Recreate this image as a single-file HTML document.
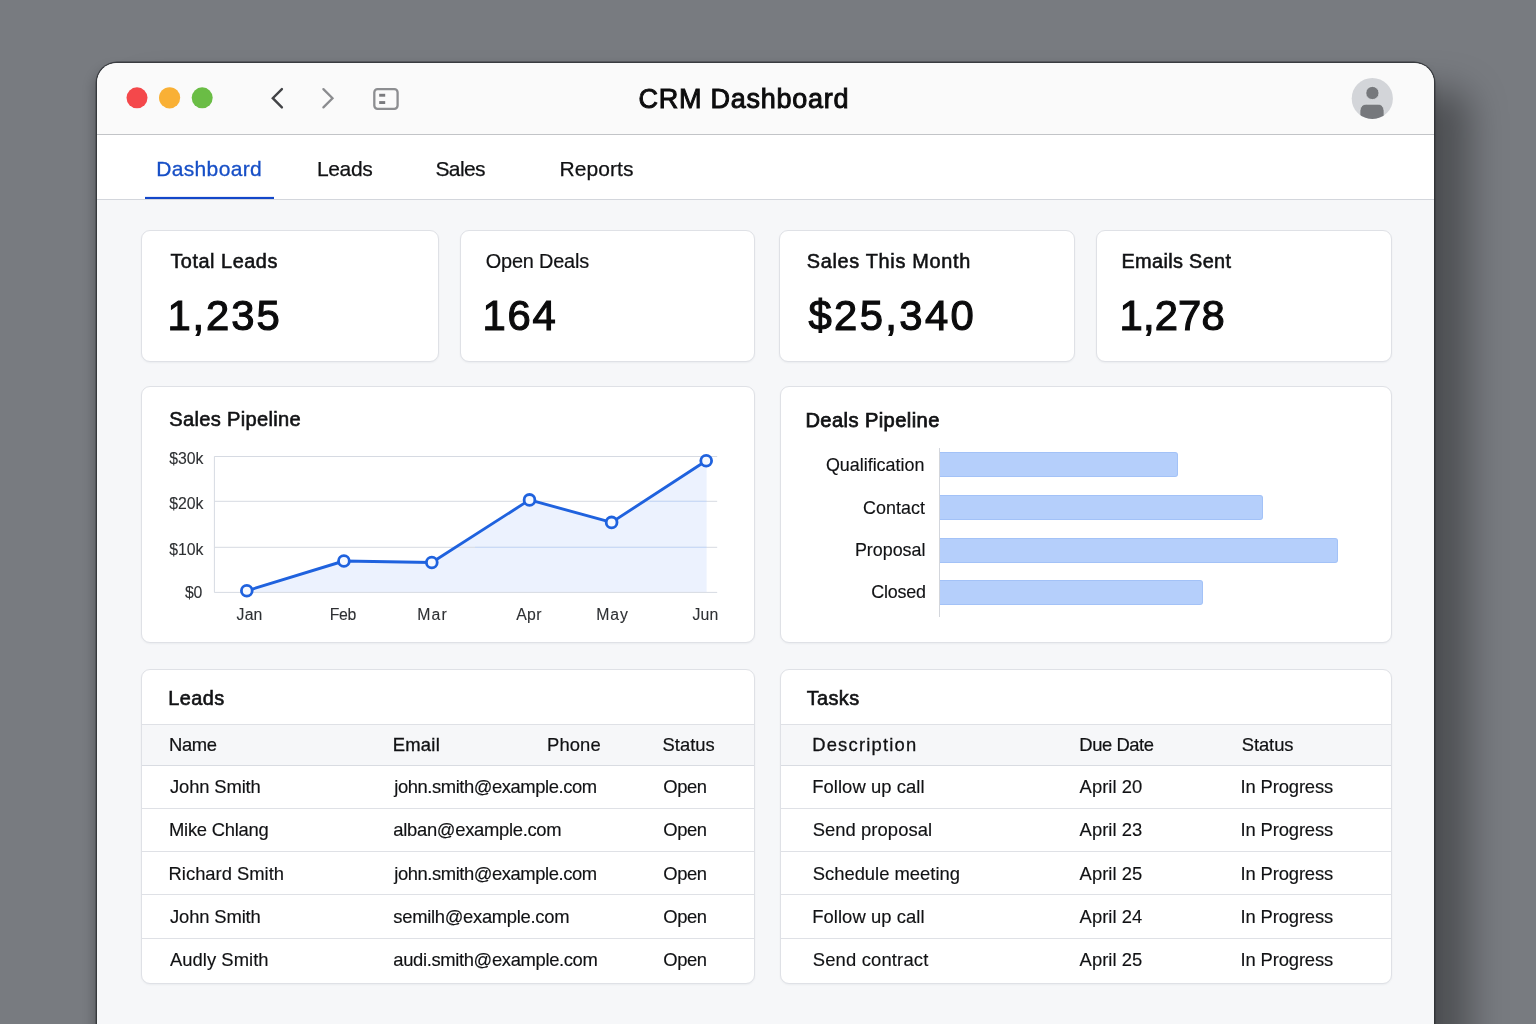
<!DOCTYPE html>
<html lang="en">
<head>
<meta charset="utf-8">
<title>CRM Dashboard</title>
<style>
  html,body{margin:0;padding:0;}
  body{width:1536px;height:1024px;overflow:hidden;position:relative;background:#787b80;font-family:"Liberation Sans",sans-serif;}
  .abs{position:absolute;}
  .win{position:absolute;left:97px;top:63px;width:1337px;height:1000px;border-radius:20px 20px 0 0;background:#f6f7f9;
       box-shadow:0 0 0 1.4px rgba(44,46,50,.8), 36px 27px 36px 0 rgba(0,0,0,.35), -3px 6px 12px 1px rgba(0,0,0,.20);overflow:hidden;}
  .titlebar{position:absolute;left:0;top:0;width:100%;height:71px;background:#fafafa;border-bottom:1px solid #c2c4c7;}
  .tabbar{position:absolute;left:0;top:72px;width:100%;height:64px;background:#fff;border-bottom:1px solid #d3d6dc;}
  .card{position:absolute;background:#fff;border:1px solid #dfe1e6;border-radius:9px;box-sizing:border-box;box-shadow:0 1px 2px rgba(20,30,50,.05);}
  .t{position:absolute;white-space:pre;line-height:normal;font-family:"Liberation Sans",sans-serif;}
  .textlayer{position:absolute;left:0;top:0;width:1536px;height:1024px;will-change:transform;}
  .hl{position:absolute;height:1px;background:#dfe1e6;}
  .bar{position:absolute;left:940px;height:25px;background:#b5cffb;border:1px solid #a3c2f7;border-left:none;border-radius:0 3px 3px 0;box-sizing:border-box;}
</style>
</head>
<body>
<!-- app window -->
<div class="win">
  <div class="titlebar"></div>
  <div class="tabbar"></div>
</div>

<!-- traffic lights -->
<svg class="abs" style="left:120px;top:80px" width="100" height="36" viewBox="120 80 100 36">
  <circle cx="137" cy="97.8" r="10.5" fill="#f4484b"/>
  <circle cx="169.6" cy="97.8" r="10.6" fill="#f9b035"/>
  <circle cx="202.2" cy="97.8" r="10.5" fill="#6abd45"/>
</svg>

<!-- toolbar icons -->
<svg class="abs" style="left:260px;top:80px" width="160" height="40" viewBox="260 80 160 40" fill="none" stroke-linejoin="miter">
  <path d="M281.9 89.1 L272.8 98.2 L281.9 107.4" stroke="#424346" stroke-width="2.4" stroke-linecap="round"/>
  <path d="M323.4 89.1 L332.5 98.2 L323.4 107.4" stroke="#8b8c8f" stroke-width="2.3" stroke-linecap="round"/>
  <rect x="374.3" y="89.2" width="23.3" height="19.6" rx="3.2" stroke="#8d8e91" stroke-width="2.3"/>
  <rect x="379.2" y="93.8" width="6" height="2.9" fill="#7a7b7e"/>
  <rect x="379.2" y="101.1" width="6" height="2.9" fill="#7a7b7e"/>
</svg>

<!-- avatar -->
<svg class="abs" style="left:1350px;top:77px" width="44" height="44" viewBox="1350 77 44 44">
  <defs><clipPath id="avc"><circle cx="1372.3" cy="98.5" r="20.4"/></clipPath></defs>
  <circle cx="1372.3" cy="98.5" r="20.6" fill="#d3d5d9"/>
  <circle cx="1372.4" cy="93" r="6.6" fill="#76787c" stroke="#e0e2e5" stroke-width="0.8"/>
  <path clip-path="url(#avc)" d="M1359.9 112 C1359.9 106.8 1362.6 104.2 1366.2 104.2 H1378 C1381.6 104.2 1384.1 106.8 1384.1 112 V124 H1359.9 Z" fill="#76787c" stroke="#e0e2e5" stroke-width="0.8"/>
</svg>

<!-- active tab underline -->
<svg class="abs" style="left:140px;top:190px" width="140" height="12" viewBox="140 190 140 12"><rect x="145" y="196.9" width="129" height="2.1" fill="#1347c9"/></svg>

<!-- stat cards -->
<div class="card" style="left:141px;top:230px;width:298px;height:132px"></div>
<div class="card" style="left:460px;top:230px;width:295px;height:132px"></div>
<div class="card" style="left:779px;top:230px;width:296px;height:132px"></div>
<div class="card" style="left:1096px;top:230px;width:296px;height:132px"></div>

<!-- chart cards -->
<div class="card" style="left:141px;top:386px;width:614px;height:257px"></div>
<div class="card" style="left:779.5px;top:386px;width:612.5px;height:257px"></div>

<!-- sales pipeline line chart -->
<svg class="abs" style="left:200px;top:440px" width="540" height="170" viewBox="200 440 540 170" fill="none">
  <path d="M246.8 590.8 L343.9 561 L431.8 562.5 L529.5 499.9 L611.6 522.4 L706.6 460.7 V592.3 H246.8 Z" fill="#ecf2fe"/>
  <g stroke="#d6dae2" stroke-width="1">
    <path d="M214.3 456.5 H717.2 M214.3 501.3 H717.2 M214.3 547.3 H717.2 M214.3 592.4 H717.2"/>
    <path d="M214.4 456.5 V592.4"/>
  </g>
  <g stroke="#c6d9fb" stroke-width="1"><path d="M650 501.3 H706.6 M475 547.3 H706.6"/></g>
  <path d="M246.8 590.8 L343.9 561 L431.8 562.5 L529.5 499.9 L611.6 522.4 L706.2 460.7" stroke="#1f62de" stroke-width="2.9" stroke-linejoin="round" stroke-linecap="round"/>
  <g fill="#f6f9ff" stroke="#1f62de" stroke-width="2.8">
    <circle cx="246.8" cy="590.8" r="5.4"/><circle cx="343.9" cy="561" r="5.4"/><circle cx="431.8" cy="562.5" r="5.4"/>
    <circle cx="529.5" cy="499.9" r="5.4"/><circle cx="611.6" cy="522.4" r="5.4"/><circle cx="706.2" cy="460.7" r="5.4"/>
  </g>
</svg>

<!-- deals pipeline bars -->
<div class="abs" style="left:939px;top:448px;width:1px;height:168.5px;background:#d3d6dc"></div>
<div class="bar" style="top:452.2px;width:237.7px"></div>
<div class="bar" style="top:495.2px;width:323px"></div>
<div class="bar" style="top:538px;width:397.6px"></div>
<div class="bar" style="top:580.4px;width:262.6px"></div>

<!-- table cards -->
<div class="card" style="left:141px;top:669px;width:614px;height:315px;overflow:hidden">
  <div class="abs" style="left:0;top:55px;width:100%;height:41px;background:#f6f7f9"></div>
</div>
<div class="card" style="left:779.5px;top:669px;width:612.5px;height:315px;overflow:hidden">
  <div class="abs" style="left:0;top:55px;width:100%;height:41px;background:#f6f7f9"></div>
</div>
<!-- table rules -->
<div class="hl" style="left:142px;width:612px;top:724.3px"></div>
<div class="hl" style="left:142px;width:612px;top:765.2px;background:#d9dce2"></div>
<div class="hl" style="left:142px;width:612px;top:808px"></div>
<div class="hl" style="left:142px;width:612px;top:851.3px"></div>
<div class="hl" style="left:142px;width:612px;top:894.4px"></div>
<div class="hl" style="left:142px;width:612px;top:938px"></div>
<div class="hl" style="left:780.5px;width:610.5px;top:724.3px"></div>
<div class="hl" style="left:780.5px;width:610.5px;top:765.2px;background:#d9dce2"></div>
<div class="hl" style="left:780.5px;width:610.5px;top:808px"></div>
<div class="hl" style="left:780.5px;width:610.5px;top:851.3px"></div>
<div class="hl" style="left:780.5px;width:610.5px;top:894.4px"></div>
<div class="hl" style="left:780.5px;width:610.5px;top:938px"></div>

<!-- all text -->
<div class="textlayer">
<span class="t title" style="left:638.60px;top:83.85px;font-size:27px;letter-spacing:0.745px;color:#0c0c0d;-webkit-text-stroke:0.95px #0c0c0d">CRM Dashboard</span>
<span class="t tab active" style="left:156.25px;top:157.10px;font-size:21px;letter-spacing:0.337px;color:#174fc6;-webkit-text-stroke:0.3px #174fc6">Dashboard</span>
<span class="t tab" style="left:317.00px;top:157.10px;font-size:21px;letter-spacing:-0.367px;color:#111214;-webkit-text-stroke:0.25px #111214">Leads</span>
<span class="t tab" style="left:435.50px;top:157.10px;font-size:21px;letter-spacing:-0.633px;color:#111214;-webkit-text-stroke:0.25px #111214">Sales</span>
<span class="t tab" style="left:559.50px;top:157.10px;font-size:21px;letter-spacing:0.078px;color:#111214;-webkit-text-stroke:0.25px #111214">Reports</span>
<span class="t lbl" style="left:170.40px;top:249.90px;font-size:19.9px;letter-spacing:0.521px;color:#111214;-webkit-text-stroke:0.55px #111214">Total Leads</span>
<span class="t lbl" style="left:485.80px;top:249.90px;font-size:19.9px;letter-spacing:-0.188px;color:#111214;-webkit-text-stroke:0.2px #111214">Open Deals</span>
<span class="t lbl" style="left:806.70px;top:249.90px;font-size:19.9px;letter-spacing:0.693px;color:#111214;-webkit-text-stroke:0.55px #111214">Sales This Month</span>
<span class="t lbl" style="left:1121.50px;top:249.90px;font-size:19.9px;letter-spacing:0.340px;color:#111214;-webkit-text-stroke:0.55px #111214">Emails Sent</span>
<span class="t val" style="left:167.40px;top:291.80px;font-size:41.8px;letter-spacing:1.913px;color:#0b0b0c;-webkit-text-stroke:1.15px #0b0b0c">1,235</span>
<span class="t val" style="left:482.40px;top:291.80px;font-size:41.8px;letter-spacing:1.755px;color:#0b0b0c;-webkit-text-stroke:1.15px #0b0b0c">164</span>
<span class="t val" style="left:808.50px;top:291.80px;font-size:41.8px;letter-spacing:2.360px;color:#0b0b0c;-webkit-text-stroke:1.15px #0b0b0c">$25,340</span>
<span class="t val" style="left:1119.50px;top:291.80px;font-size:41.8px;letter-spacing:0.163px;color:#0b0b0c;-webkit-text-stroke:1.15px #0b0b0c">1,278</span>
<span class="t ctitle" style="left:169.30px;top:408.40px;font-size:20.1px;letter-spacing:0.318px;color:#111214;-webkit-text-stroke:0.6px #111214">Sales Pipeline</span>
<span class="t ctitle" style="left:805.40px;top:408.60px;font-size:20.1px;letter-spacing:0.425px;color:#111214;-webkit-text-stroke:0.75px #111214">Deals Pipeline</span>
<span class="t ax" style="left:169.30px;top:449.75px;font-size:15.8px;letter-spacing:-0.052px;color:#2e3033;-webkit-text-stroke:0.1px #2e3033">$30k</span>
<span class="t ax" style="left:169.30px;top:495.20px;font-size:15.8px;letter-spacing:-0.052px;color:#2e3033;-webkit-text-stroke:0.1px #2e3033">$20k</span>
<span class="t ax" style="left:169.30px;top:541.20px;font-size:15.8px;letter-spacing:-0.052px;color:#2e3033;-webkit-text-stroke:0.1px #2e3033">$10k</span>
<span class="t ax" style="left:185.00px;top:584.30px;font-size:15.8px;letter-spacing:-0.285px;color:#2e3033;-webkit-text-stroke:0.1px #2e3033">$0</span>
<span class="t ax" style="left:236.60px;top:606.40px;font-size:15.8px;letter-spacing:0.158px;color:#2e3033;-webkit-text-stroke:0.1px #2e3033">Jan</span>
<span class="t ax" style="left:329.80px;top:606.40px;font-size:15.8px;letter-spacing:-0.417px;color:#2e3033;-webkit-text-stroke:0.1px #2e3033">Feb</span>
<span class="t ax" style="left:417.30px;top:606.40px;font-size:15.8px;letter-spacing:1.078px;color:#2e3033;-webkit-text-stroke:0.1px #2e3033">Mar</span>
<span class="t ax" style="left:516.20px;top:606.40px;font-size:15.8px;letter-spacing:0.389px;color:#2e3033;-webkit-text-stroke:0.1px #2e3033">Apr</span>
<span class="t ax" style="left:596.20px;top:606.40px;font-size:15.8px;letter-spacing:0.928px;color:#2e3033;-webkit-text-stroke:0.1px #2e3033">May</span>
<span class="t ax" style="left:692.40px;top:606.40px;font-size:15.8px;letter-spacing:0.258px;color:#2e3033;-webkit-text-stroke:0.1px #2e3033">Jun</span>
<span class="t bl" style="left:825.90px;top:454.70px;font-size:17.9px;letter-spacing:-0.000px;color:#111214;-webkit-text-stroke:0.15px #111214">Qualification</span>
<span class="t bl" style="left:863.00px;top:498.40px;font-size:17.9px;letter-spacing:0.052px;color:#111214;-webkit-text-stroke:0.15px #111214">Contact</span>
<span class="t bl" style="left:854.90px;top:539.90px;font-size:17.9px;letter-spacing:-0.005px;color:#111214;-webkit-text-stroke:0.15px #111214">Proposal</span>
<span class="t bl" style="left:871.20px;top:582.40px;font-size:17.9px;letter-spacing:-0.188px;color:#111214;-webkit-text-stroke:0.15px #111214">Closed</span>
<span class="t ctitle" style="left:168.30px;top:686.80px;font-size:19.9px;letter-spacing:0.438px;color:#111214;-webkit-text-stroke:0.6px #111214">Leads</span>
<span class="t ctitle" style="left:806.70px;top:686.80px;font-size:19.9px;letter-spacing:0.401px;color:#111214;-webkit-text-stroke:0.6px #111214">Tasks</span>
<span class="t th" style="left:169.00px;top:733.80px;font-size:18.4px;letter-spacing:-0.343px;color:#111214;-webkit-text-stroke:0.2px #111214">Name</span>
<span class="t th" style="left:392.70px;top:733.80px;font-size:18.4px;letter-spacing:0.275px;color:#111214;-webkit-text-stroke:0.35px #111214">Email</span>
<span class="t th" style="left:547.00px;top:733.80px;font-size:18.4px;letter-spacing:0.112px;color:#111214;-webkit-text-stroke:0.2px #111214">Phone</span>
<span class="t th" style="left:662.50px;top:733.80px;font-size:18.4px;letter-spacing:0.032px;color:#111214;-webkit-text-stroke:0.2px #111214">Status</span>
<span class="t th" style="left:812.20px;top:733.80px;font-size:18.4px;letter-spacing:1.204px;color:#111214;-webkit-text-stroke:0.3px #111214">Description</span>
<span class="t th" style="left:1079.30px;top:733.80px;font-size:18.4px;letter-spacing:-0.438px;color:#111214;-webkit-text-stroke:0.2px #111214">Due Date</span>
<span class="t th" style="left:1241.70px;top:733.80px;font-size:18.4px;letter-spacing:-0.068px;color:#111214;-webkit-text-stroke:0.2px #111214">Status</span>
<span class="t td" style="left:170.00px;top:775.90px;font-size:18.4px;letter-spacing:-0.130px;color:#111214;-webkit-text-stroke:0.15px #111214">John Smith</span>
<span class="t td" style="left:394.30px;top:775.90px;font-size:18.4px;letter-spacing:-0.435px;color:#111214;-webkit-text-stroke:0.15px #111214">john.smith@example.com</span>
<span class="t td" style="left:663.30px;top:775.90px;font-size:18.4px;letter-spacing:-0.454px;color:#111214;-webkit-text-stroke:0.15px #111214">Open</span>
<span class="t td" style="left:169.00px;top:819.20px;font-size:18.4px;letter-spacing:-0.249px;color:#111214;-webkit-text-stroke:0.15px #111214">Mike Chlang</span>
<span class="t td" style="left:393.30px;top:819.20px;font-size:18.4px;letter-spacing:-0.295px;color:#111214;-webkit-text-stroke:0.15px #111214">alban@example.com</span>
<span class="t td" style="left:663.30px;top:819.20px;font-size:18.4px;letter-spacing:-0.454px;color:#111214;-webkit-text-stroke:0.15px #111214">Open</span>
<span class="t td" style="left:168.60px;top:862.60px;font-size:18.4px;letter-spacing:-0.009px;color:#111214;-webkit-text-stroke:0.15px #111214">Richard Smith</span>
<span class="t td" style="left:394.30px;top:862.60px;font-size:18.4px;letter-spacing:-0.435px;color:#111214;-webkit-text-stroke:0.15px #111214">john.smith@example.com</span>
<span class="t td" style="left:663.30px;top:862.60px;font-size:18.4px;letter-spacing:-0.454px;color:#111214;-webkit-text-stroke:0.15px #111214">Open</span>
<span class="t td" style="left:170.00px;top:906.00px;font-size:18.4px;letter-spacing:-0.130px;color:#111214;-webkit-text-stroke:0.15px #111214">John Smith</span>
<span class="t td" style="left:393.30px;top:906.00px;font-size:18.4px;letter-spacing:-0.292px;color:#111214;-webkit-text-stroke:0.15px #111214">semilh@example.com</span>
<span class="t td" style="left:663.30px;top:906.00px;font-size:18.4px;letter-spacing:-0.454px;color:#111214;-webkit-text-stroke:0.15px #111214">Open</span>
<span class="t td" style="left:170.00px;top:949.40px;font-size:18.4px;letter-spacing:0.041px;color:#111214;-webkit-text-stroke:0.15px #111214">Audly Smith</span>
<span class="t td" style="left:393.30px;top:949.40px;font-size:18.4px;letter-spacing:-0.349px;color:#111214;-webkit-text-stroke:0.15px #111214">audi.smith@example.com</span>
<span class="t td" style="left:663.30px;top:949.40px;font-size:18.4px;letter-spacing:-0.454px;color:#111214;-webkit-text-stroke:0.15px #111214">Open</span>
<span class="t td" style="left:812.20px;top:775.90px;font-size:18.4px;letter-spacing:0.075px;color:#111214;-webkit-text-stroke:0.15px #111214">Follow up call</span>
<span class="t td" style="left:1079.60px;top:775.90px;font-size:18.4px;letter-spacing:0.039px;color:#111214;-webkit-text-stroke:0.15px #111214">April 20</span>
<span class="t td" style="left:1240.60px;top:775.90px;font-size:18.4px;letter-spacing:-0.144px;color:#111214;-webkit-text-stroke:0.15px #111214">In Progress</span>
<span class="t td" style="left:812.70px;top:819.20px;font-size:18.4px;letter-spacing:0.065px;color:#111214;-webkit-text-stroke:0.15px #111214">Send proposal</span>
<span class="t td" style="left:1079.60px;top:819.20px;font-size:18.4px;letter-spacing:0.039px;color:#111214;-webkit-text-stroke:0.15px #111214">April 23</span>
<span class="t td" style="left:1240.60px;top:819.20px;font-size:18.4px;letter-spacing:-0.144px;color:#111214;-webkit-text-stroke:0.15px #111214">In Progress</span>
<span class="t td" style="left:812.70px;top:862.60px;font-size:18.4px;letter-spacing:0.007px;color:#111214;-webkit-text-stroke:0.15px #111214">Schedule meeting</span>
<span class="t td" style="left:1079.60px;top:862.60px;font-size:18.4px;letter-spacing:0.039px;color:#111214;-webkit-text-stroke:0.15px #111214">April 25</span>
<span class="t td" style="left:1240.60px;top:862.60px;font-size:18.4px;letter-spacing:-0.144px;color:#111214;-webkit-text-stroke:0.15px #111214">In Progress</span>
<span class="t td" style="left:812.20px;top:906.00px;font-size:18.4px;letter-spacing:0.075px;color:#111214;-webkit-text-stroke:0.15px #111214">Follow up call</span>
<span class="t td" style="left:1079.60px;top:906.00px;font-size:18.4px;letter-spacing:0.039px;color:#111214;-webkit-text-stroke:0.15px #111214">April 24</span>
<span class="t td" style="left:1240.60px;top:906.00px;font-size:18.4px;letter-spacing:-0.144px;color:#111214;-webkit-text-stroke:0.15px #111214">In Progress</span>
<span class="t td" style="left:812.70px;top:949.40px;font-size:18.4px;letter-spacing:0.178px;color:#111214;-webkit-text-stroke:0.15px #111214">Send contract</span>
<span class="t td" style="left:1079.60px;top:949.40px;font-size:18.4px;letter-spacing:0.039px;color:#111214;-webkit-text-stroke:0.15px #111214">April 25</span>
<span class="t td" style="left:1240.60px;top:949.40px;font-size:18.4px;letter-spacing:-0.144px;color:#111214;-webkit-text-stroke:0.15px #111214">In Progress</span>
</div>
</body>
</html>
